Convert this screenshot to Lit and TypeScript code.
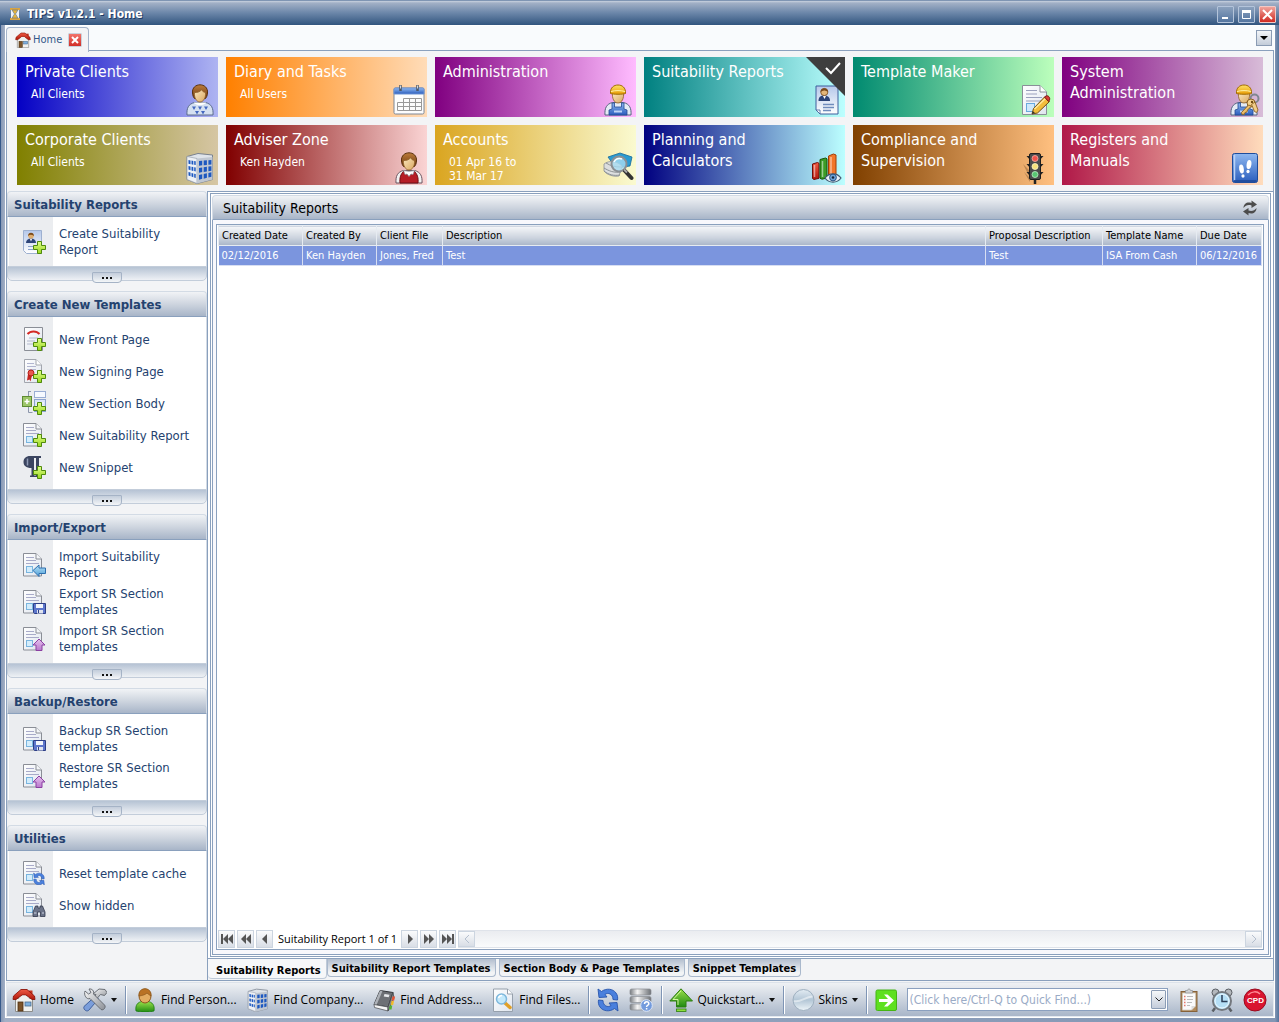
import { LitElement, html, svg, css, TemplateResult, SVGTemplateResult } from "lit";
import { customElement, state } from "lit/decorators.js";
import { classMap } from "lit/directives/class-map.js";

/* ---------- icon parts ---------- */

const frame = (size: number, art: SVGTemplateResult, box = size) =>
  html`<svg class="ico" width=${size} height=${size} viewBox="0 0 ${box} ${box}" aria-hidden="true">${art}</svg>`;

const gradients = html`<svg class="defs" width="0" height="0" aria-hidden="true">
  <defs>
    <linearGradient id="paper" x1="0" y1="0" x2="1" y2="1"><stop offset="0" stop-color="#ffffff"/><stop offset="1" stop-color="#dfe5ee"/></linearGradient>
    <linearGradient id="paperBlue" x1="0" y1="0" x2="0" y2="1"><stop offset="0" stop-color="#b5c8ea"/><stop offset="1" stop-color="#ffffff"/></linearGradient>
    <linearGradient id="skin" x1="0" y1="0" x2="1" y2="1"><stop offset="0" stop-color="#fbe6bd"/><stop offset="1" stop-color="#d9a860"/></linearGradient>
    <linearGradient id="hair" x1="0" y1="0" x2="0" y2="1"><stop offset="0" stop-color="#bd7c3a"/><stop offset="1" stop-color="#6f3c12"/></linearGradient>
    <linearGradient id="helmet" x1="0" y1="0" x2="0" y2="1"><stop offset="0" stop-color="#ffe267"/><stop offset="1" stop-color="#e79b05"/></linearGradient>
    <linearGradient id="blue" x1="0" y1="0" x2="0" y2="1"><stop offset="0" stop-color="#8fb8f0"/><stop offset="1" stop-color="#2a5dbd"/></linearGradient>
    <linearGradient id="sky" x1="0" y1="0" x2="0" y2="1"><stop offset="0" stop-color="#b8e2f8"/><stop offset="1" stop-color="#4f9fd6"/></linearGradient>
    <linearGradient id="green" x1="0" y1="0" x2="0" y2="1"><stop offset="0" stop-color="#9be04a"/><stop offset="1" stop-color="#1f8a12"/></linearGradient>
    <linearGradient id="lime" x1="0" y1="0" x2="0" y2="1"><stop offset="0" stop-color="#e0ff8a"/><stop offset="1" stop-color="#9ad71f"/></linearGradient>
    <linearGradient id="grey" x1="0" y1="0" x2="1" y2="1"><stop offset="0" stop-color="#fafafa"/><stop offset="1" stop-color="#8b8f96"/></linearGradient>
    <linearGradient id="steel" x1="0" y1="0" x2="1" y2="0"><stop offset="0" stop-color="#777b80"/><stop offset=".35" stop-color="#f5f5f5"/><stop offset="1" stop-color="#6d7176"/></linearGradient>
    <linearGradient id="red" x1="0" y1="0" x2="0" y2="1"><stop offset="0" stop-color="#ef5a43"/><stop offset="1" stop-color="#b0180c"/></linearGradient>
    <linearGradient id="purple" x1="0" y1="0" x2="0" y2="1"><stop offset="0" stop-color="#e6c3ef"/><stop offset="1" stop-color="#b977cc"/></linearGradient>
    <linearGradient id="ball" x1="0" y1="0" x2="0" y2="1"><stop offset="0" stop-color="#e3ecf3"/><stop offset=".5" stop-color="#b3c6d6"/><stop offset="1" stop-color="#eef5f9"/></linearGradient>
  </defs>
</svg>`;

const face = (dx = 0) => svg`<g transform="translate(${dx} 0)">
  <path d="M8.500 9C8 3.500 12 .8 16 .8s8 2.700 7.500 8.200c-.2 2.500-1 4.500-2 5.500h-11c-1-1-1.800-3-2-5.500z" fill="url(#hair)" stroke="#5a3210"/>
  <path d="M10.500 8.500c3 .3 5.500-.8 7-2.700 1 1.700 2.500 2.500 4 2.700.6 5-2 9.500-5.500 9.500s-6.100-4.500-5.500-9.500z" fill="url(#skin)" stroke="#8d5d26" stroke-width=".8"/></g>`;

const worker = (dx = 0) => svg`<g transform="translate(${dx} 0)">
  <path d="M3 31c-.5-7 1.500-11 7.500-12.500h11C27.500 20 29.500 24 29 31z" fill="#e4ebf5" stroke="#55657e"/>
  <path d="M7 31v-5l3-1v-6h2.500v4h7v-4H22v6l3 1v5z" fill="url(#blue)" stroke="#234a96" stroke-width=".8"/>
  <path d="M12 26.500h8v2h-8z" fill="#bcd3f5"/>
  <path d="M10.500 9h11c.6 5-1.500 10-5.500 10s-6.100-5-5.500-10z" fill="url(#skin)" stroke="#8d5d26" stroke-width=".8"/>
  <path d="M8.500 9.500C8 3.500 12 1 16 1s8 2.500 7.500 8.500c-3 1-12 1-15 0z" fill="url(#helmet)" stroke="#a06b04"/>
  <path d="M9 7.500c4-1.200 10-1.200 14 0" stroke="#fff2a8" fill="none"/></g>`;

const tileArt: Record<string, SVGTemplateResult> = {
  client: svg`<path d="M3 31c-.5-7 1.500-11 7.500-12.500h11C27.500 20 29.500 24 29 31z" fill="#d5e0f1" stroke="#5a6b8c"/>
    <path d="M10 18.500c2 3.500 10 3.500 12 0z" fill="#fff"/>
    <g fill="#4468c0"><path d="M8 22.500h4l-2 3.500zM14 22.500h4l-2 3.500zM20 22.500h4l-2 3.500zM11 27h4l-2 3.500zM17 27h4l-2 3.500z"/></g>${face()}`,
  adviser: svg`<path d="M3 31c-.5-7 1.500-11 7.500-12.500h11C27.500 20 29.500 24 29 31z" fill="#f2f2f2" stroke="#6b5560"/>
    <path d="M7 31c-.5-5 .5-9 4-12l5 5 5-5c3.500 3 4.500 7 4 12z" fill="#b51d26" stroke="#6e0d14"/>
    <path d="M10.500 18.500l1.500 4 2-.5 2 2.500 2-2.500 2 .5 1.500-4-5.500 1z" fill="#fff" stroke="#8a8f98" stroke-width=".7"/>${face()}`,
  calendar: svg`<rect x="1" y="4" width="30" height="26" rx="1.500" fill="#fdfdfd" stroke="#7d8796"/>
    <path d="M1 10V5.500C1 4.500 1.500 4 2.500 4h27c1 0 1.500.5 1.500 1.500V10z" fill="url(#blue)" stroke="#6c93d4"/>
    <path d="M7.500 1v6M24.500 1v6" stroke="#4d5868" stroke-width="2.500"/><path d="M7.500 1.500v3M24.500 1.500v3" stroke="#cfd6e0"/>
    <path d="M10.500 14.500h18v12h-24v-8h24M4.500 22.500h24M10.500 14.500v12M16.500 14.500v12M22.500 14.500v12" fill="none" stroke="#999"/>`,
  worker: worker(),
  report: svg`<path d="M5 2h22v28H9l-4-4z" fill="url(#paperBlue)" stroke="#3d5f9c"/>
    <path d="M5 26h4v4z" fill="#fff" stroke="#3d5f9c" stroke-width=".8"/>
    <path d="M7.500 17c0-4 2-5.500 5.500-5.500s6 1.500 6 5.500z" fill="#2c4478"/><path d="M12 12l1.500 3 1.500-3z" fill="#fff"/>
    <circle cx="13.300" cy="8" r="3.600" fill="#e3b679" stroke="#7a4a1b" stroke-width=".8"/><path d="M9.600 8c0-5 7.400-5 7.400 0-3-2-5-2-7.400 0z" fill="#7a4a1b"/>
    <path d="M12 20.500h11M12 23.500h11M12 26.500h8" stroke="#6f8cbc" stroke-width="1.300"/>`,
  write: svg`<path d="M2.500 1.500H20L26.500 8v22.500h-24z" fill="url(#paper)" stroke="#8a8f98"/>
    <path d="M20 1.500V8h6.500" fill="#fff" stroke="#8a8f98"/>
    <path d="M6 6.500h11M6 10h11M6 13.500h16M6 17h16" stroke="#9aa1bd"/>
    <rect x="6.500" y="19.500" width="8" height="8" fill="#cfe8fb" stroke="#68a9dd"/>
    <path d="M12 30l1.500-5.500L24.500 13l5 4.500L17.500 29z" fill="#f2bd3c" stroke="#714d10"/>
    <path d="M14.500 25l11-10.500" stroke="#ffe79a" stroke-width="1.500"/>
    <path d="M24.500 13l1.500-1c2-1 4.500 1.500 3.500 4l-1 1.500z" fill="#d83b36" stroke="#7c1512"/>
    <path d="M12 30l.8-3 2.200 2z" fill="#333"/>`,
  keys: svg`${worker(-1)}<circle cx="25.500" cy="14.500" r="4" fill="none" stroke="#7f8791" stroke-width="2"/>
    <circle cx="22" cy="19" r="4" fill="#f5d28c" stroke="#8b6120"/><circle cx="23" cy="18" r="1.200" fill="#6f4a12"/>
    <path d="M19.500 21l-7 7.500.5 2 2.500-.3.500-1.700 2-.5.500-2 4-4z" fill="#eebf6a" stroke="#8b6120" stroke-width=".9"/>
    <path d="M26 18l3 8-1.500 2.500-2-1-3-7z" fill="#f1cd88" stroke="#8b6120" stroke-width=".9"/>`,
  building: svg`<path d="M3 4.500L14 1.500 28.500 3v24.500L13 31.500l-10-4z" fill="#dfe4ea" stroke="#7a828e"/>
    <path d="M3 4.500l10 2v25l-10-4z" fill="#eef1f5" stroke="#9aa2ae" stroke-width=".7"/>
    <path d="M13 6.500L28.500 5v22.500L13 31.500z" fill="#c0c7d1"/>
    <g fill="#1c58c0"><path d="M15 9l3.200-.3v4.600L15 13.700zM19.700 8.600l3.200-.3v4.600l-3.200.4zM24.400 8.200l3-.3v4.500l-3 .4zM15 16l3.200-.5v4.600l-3.200.7zM19.700 15.300l3.200-.5v4.600l-3.200.6zM24.400 14.600l3-.4v4.500l-3 .6zM15 23l3.200-.8v4.600l-3.200.9zM19.700 22l3.200-.8v4.600l-3.200.9zM24.400 20.900l3-.7v4.600l-3 .8z"/>
    <path d="M4.500 8l2 .4v3.800l-2-.5zM7.500 8.500l1.800.4v3.800l-1.800-.4zM10.200 9l1.500.2V13l-1.500-.3zM4.500 14l2 .4v3.800l-2-.6zM7.500 14.700l1.800.4v3.800l-1.800-.5zM10.200 15.300l1.500.3v3.800l-1.500-.4zM4.500 20l2 .6v3.600l-2-.7zM7.500 21l1.800.5v3.700l-1.800-.6zM10.200 21.700l1.500.4v3.800l-1.500-.5z"/></g>`,
  accounts: svg`<path d="M6 5l12-4 12 4-2 9-14 2z" fill="#2a9bd2" stroke="#14699b" stroke-width=".8"/>
    <path d="M2 12c5-4 13-3 18 2l-3 10c-5 1-12-1-15-5z" fill="#dcdedf" stroke="#8b9094" stroke-width=".8"/>
    <path d="M2 16c5 3 10 5 17 4M2 19c5 4 10 5 16 4M4 11c5 3 9 4 15 4" fill="none" stroke="#8d9295"/>
    <circle cx="17" cy="12" r="7.500" fill="#a8dcf2" fill-opacity=".8" stroke="#8a8f94" stroke-width="2"/>
    <path d="M12 10c1.500-3 5-4.500 8-3" stroke="#fff" stroke-width="1.500" fill="none"/>
    <path d="M23 19l6.500 7" stroke="#333" stroke-width="4" stroke-linecap="round"/><path d="M22 17.500l3 3" stroke="#aaa" stroke-width="2"/>`,
  chart: svg`<path d="M1.500 12l5-1.500 1.500.8v15l-5 1.200-1.500-1z" fill="url(#red)" stroke="#6e0d08"/>
    <path d="M9 7.500l5.500-1.500 1.500.8V26l-5 1.200-2-1z" fill="#3c9c27" stroke="#175409"/>
    <path d="M17.500 4l5-2 2.500 1v22l-5 1.500-2.500-1.500z" fill="#f2762a" stroke="#a03d07"/>
    <path d="M3.500 13v12M11.500 9v16M20 5v17" stroke="#fff" stroke-opacity=".5" stroke-width="1.500"/>
    <path d="M14 26c4-5.500 12-5.500 16 0-4 5.500-12 5.500-16 0z" fill="#e8f0f8" stroke="#41576f" stroke-width="1.200"/>
    <circle cx="22" cy="25.500" r="3.400" fill="#6ea3d8" stroke="#2d5584"/><circle cx="22" cy="25.500" r="1.300" fill="#16253a"/>`,
  lights: svg`<path d="M3 12l8 8v8zM4 20l6 6v4z" fill="#5a3a1c" fill-opacity=".35"/>
    <path d="M6.500 4H11v5zM6.500 12H11v5zM6.500 20H11v5zM23.500 4H19v5zM23.500 12H19v5zM23.500 20H19v5z" fill="#222"/>
    <rect x="9.500" y="1.500" width="11" height="26" rx="1.500" fill="#4b4b4b" stroke="#1d1d1d"/><path d="M15 27v5" stroke="#222" stroke-width="2.500"/>
    <circle cx="15" cy="6.500" r="3" fill="#f0534b" stroke="#f9b0a8" stroke-width=".8"/><circle cx="15" cy="14.500" r="3" fill="#f7e27c" stroke="#fff6c4" stroke-width=".8"/><circle cx="15" cy="22.500" r="3" fill="#58c773" stroke="#bdf0c7" stroke-width=".8"/>`,
  book: svg`<rect x="3.500" y="1.500" width="25" height="29" rx="2" fill="url(#blue)" stroke="#1e4d9c"/>
    <path d="M5.500 3v25.500" stroke="#b8d2f7" stroke-width="1.500"/><path d="M5 29h22.500" stroke="#1d4796" stroke-width="1.500"/>
    <g fill="#fff"><ellipse cx="12.500" cy="17" rx="2.300" ry="4.500" transform="rotate(-8 12.500 17)"/><ellipse cx="14" cy="24" rx="1.600" ry="1.800"/>
    <ellipse cx="20" cy="12.500" rx="2.400" ry="4.600" transform="rotate(8 20 12.500)"/><ellipse cx="19" cy="19.500" rx="1.600" ry="1.800"/></g>`,
};

const doc = svg`<path d="M1.500 .5H14L19.500 6v17h-18z" fill="url(#paper)" stroke="#8a8e96"/>
  <path d="M14 .5V6h5.500" fill="#f4f6f9" stroke="#8a8e96"/>
  <path d="M4 4.500h8M4 7.500h10M4 10.500h13" stroke="#a8abc9"/>
  <rect x="4.500" y="13.500" width="6" height="6" fill="#d3ecfb" stroke="#79b5df"/>`;
const plus = svg`<path d="M15.500 11.500h4V15.500h4v4h-4v4h-4v-4h-4v-4h4z" fill="url(#lime)" stroke="#4f8a0c"/>`;
const disk = svg`<path d="M11.500 13.500h12v10h-11l-1-1z" fill="#5d76cc" stroke="#2d3e86"/><rect x="14" y="14" width="7" height="4" fill="#f2f5fb"/><rect x="15" y="20" width="6" height="3.500" fill="#dfe3ee"/><path d="M16.500 20v3" stroke="#2d3e86"/>`;
const up = svg`<path d="M17 12l6 6h-3v5.500h-6V18h-3z" fill="url(#purple)" stroke="#8b3fa2"/>`;

const halfTurn = svg`<path d="M2 1l3.500 2.500C10 0 17 .5 20 5c1.500 2 2 4.500 1.500 7l-4.500-.5c0-5.500-5-7.500-8-5L11 9l-8 .5z"/>`;
const cycle = svg`<g fill="#4a80dd" stroke="#2755ad" stroke-width=".9">${halfTurn}<g transform="rotate(180 12 12)">${halfTurn}</g></g>`;

const sideArt: Record<string, SVGTemplateResult> = {
  create: svg`<path d="M1.500 .5h18v23h-15l-3-3z" fill="url(#paperBlue)" stroke="#9db0d0"/>
    <path d="M4 13c0-3 2-4.500 5-4.500s5 1.500 5 4.500z" fill="#2c4478"/><path d="M8 9l1 2.500L10 9z" fill="#fff"/>
    <circle cx="9" cy="5.800" r="2.800" fill="#dfae70"/><path d="M6 6c0-4.500 6-4.500 6 0-2.500-1.600-4-1.600-6 0z" fill="#7a4a1b"/>
    <path d="M6 16.500h6M6 19.500h5" stroke="#8aa2cb"/>${plus}`,
  front: svg`<path d="M2.500 .5h18v23h-18z" fill="url(#paper)" stroke="#8a8e96"/><path d="M5.500 7c3-3.500 9-3.500 12 0" fill="none" stroke="#d42a25" stroke-width="2"/>
    <path d="M7 11h9M5 14h8M5 17h7" stroke="#b2b8cc"/>${plus}`,
  signing: svg`<path d="M2.500 .5H14L19.500 6v17.500h-17z" fill="url(#paper)" stroke="#a2a6ae"/><path d="M14 .5V6h5.500" fill="#fff" stroke="#a2a6ae"/><path d="M5 4.500h7M5 7.500h9M5 10.500h9" stroke="#b2b6d0"/>
    <path d="M6 15l-1 6.500 2.500-1 1 2 1.500-6z" fill="#c4251f"/><circle cx="9" cy="14" r="3" fill="#e85a4f" stroke="#b4201a"/>${plus}`,
  section: svg`<path d="M6 .5h3M6.500 .5v21h4" fill="none" stroke="#8c96ab"/><rect x="12.500" y=".5" width="11" height="6" fill="#f6f9ff" stroke="#9aaed4"/>
    <rect x="12.500" y="8.500" width="11" height="12" fill="#d9e4f8" stroke="#8ca3d0"/><path d="M14 12h8M14 15h8" stroke="#fff"/>
    <rect x=".5" y="5.500" width="9" height="10" fill="#9cc568" stroke="#5e8b31"/><path d="M5 8v5M2.500 10.500h5" stroke="#fff" stroke-width="1.500"/>${plus}`,
  suit: svg`${doc}${plus}`,
  snippet: svg`<path d="M8 1h11v2h-2v17.500h1V22h-5v-1.500h1V3h-2v17.500h1V22H8v-1.500h1.500V13C4 13 1.500 10.500 1.500 7S4 1 8 1z" fill="#3b4560"/><path d="M5.500 3.500v7" stroke="#8f9ab5" stroke-width="1.500"/>${plus}`,
  importReport: svg`${doc}<path d="M11 17.500l6-5.500v3h6.500v5.500H17v3z" fill="url(#sky)" stroke="#2c6fae"/>`,
  save: svg`${doc}${disk}`,
  up: svg`${doc}${up}`,
  reset: svg`${doc}<g transform="translate(10.500 11.500) scale(.54)">${cycle}</g>`,
  hidden: svg`${doc}<path d="M13.500 13h2.500v2h2v-2h2.500l2.500 6v4.500h-4.500V19h-3v4.500H11V19z" fill="#6b7388" stroke="#333a4e" stroke-width=".8"/><path d="M12 20h2.500M20 20h2" stroke="#cfd5e3"/>`,
};

const house = svg`<path d="M3.500 10.500h17v13h-17z" fill="#f1f1ee" stroke="#8d8d8a"/>
  <path d="M17 2.500h3.500v5H17z" fill="#c5341f"/>
  <path d="M1 11.500L1.500 8 9 1.500h6L22.500 8l.5 3.500h-3L14 7h-4l-6 4.500z" fill="url(#red)" stroke="#8c1409" stroke-width=".9"/>
  <path d="M10.500 7.500h3l5.500 4.500v1H5v-1z" fill="#f1f1ee"/>
  <rect x="6" y="14" width="5" height="9" fill="#7d5429" stroke="#4b2f12" stroke-width=".8"/>
  <rect x="13" y="14" width="6" height="4" fill="#7dafde" stroke="#4a6b8d" stroke-width=".8"/>`;

const barArt: Record<string, SVGTemplateResult> = {
  home: house,
  tools: svg`<path d="M1 18.500L12.500 8l3 3L5.500 22.500c-2.500 1.500-5.500-1.500-4.500-4z" fill="#7b9edb" stroke="#40609c"/>
    <path d="M10 6l6-5 6 .5 2 3-2.500 3-4-1-3.500 4-2.500-1.500 1.500-2.500z" fill="url(#grey)" stroke="#5f636a" stroke-width=".9"/>
    <path d="M2 3l3.500 3L8 4.500 6 1c3-.5 5.500 2 4.500 5l11 11c2 2-1 6-3.500 4.500L7 10.500C3.500 12 .5 7 2 3z" fill="url(#grey)" stroke="#5f636a" stroke-width=".9"/>`,
  person: svg`<path d="M3 23c-1-6 2-9 6-9.500h6c4 .5 7 3.500 6 9.500-5 1.500-13 1.500-18 0z" fill="url(#green)" stroke="#177a10" stroke-width=".8"/>
    <ellipse cx="12" cy="8" rx="6" ry="7" fill="#e3ad62" stroke="#8a5519"/><path d="M6 8C5.500 3 8.500.8 12 .8S18.500 3 18 8c-1.500-1-3-2-4-3-2 2-5 2.500-8 3z" fill="#b97325" stroke="#8a5519" stroke-width=".7"/>`,
  book: svg`<path d="M8 2.500l13 2-5 14.500L2 16.500z" fill="#6d7075" stroke="#33363a"/><path d="M2 16.500L8 2.500l2.500.4L4.500 17z" fill="#aeb2b8"/><path d="M2 16.500l.5 3 13.500 3.500V19z" fill="#f4f4f4" stroke="#55585d" stroke-width=".8"/><path d="M16 19v4l6-13-1-5.500z" fill="#888b90" stroke="#44474b" stroke-width=".8"/>
    <path d="M12.500 6l5 .8-.8 2.500-5-.8z" fill="#e7e9ec"/><path d="M20.500 8.500h2.500l-.8 4h-2.500z" fill="#e95332"/><path d="M19.500 13H22l-.8 4h-2.500z" fill="#f3bb2b"/><path d="M17.800 17.500h2.500l-.8 4H17z" fill="#55b434"/>`,
  file: svg`<path d="M2.500 1h14l5 5v17.500h-19z" fill="url(#paper)" stroke="#96a0ac"/><path d="M16.500 1v5h5" fill="#fff" stroke="#96a0ac"/>
    <path d="M14 15l5 4.500" stroke="#e0a028" stroke-width="3.500" stroke-linecap="round"/><circle cx="10.500" cy="11" r="5" fill="#c4e9fb" stroke="#7db7dc" stroke-width="1.500"/><path d="M7.500 10c.5-1.500 2-2.500 3.500-2.500" stroke="#fff" stroke-width="1.500" fill="none"/>`,
  refresh: cycle,
  database: svg`<rect x="1" y="1" width="21" height="6" rx="1.500" fill="url(#steel)" stroke="#8a8e94" stroke-width=".7"/><rect x="1" y="8.500" width="21" height="6" rx="1.500" fill="url(#steel)" stroke="#8a8e94" stroke-width=".7"/><rect x="1" y="16" width="21" height="6" rx="1.500" fill="url(#steel)" stroke="#8a8e94" stroke-width=".7"/>
    <circle cx="17.500" cy="17.500" r="5.800" fill="#739bdd" stroke="#dbe6f8"/><path d="M15.500 16c0-3 4.300-3 4.300-.3 0 1.600-2.200 1.500-2.200 3.200M17.600 20v1.600" fill="none" stroke="#fff" stroke-width="1.500"/>`,
  quick: svg`<path d="M12 .8L23.500 13H17v6H7.500v-6H.8z" fill="url(#green)" stroke="#2d7d10"/><path d="M12 3L4 11.500h5V17" fill="none" stroke="#d2f59f"/><rect x="7.500" y="21" width="9.500" height="2.500" fill="#8ee03c" stroke="#2d7d10" stroke-width=".8"/>`,
  skins: svg`<circle cx="12.500" cy="12" r="10.500" fill="url(#ball)" stroke="#9fb0c0"/><path d="M3 13c6 2 11-4 18.500-4.500" fill="none" stroke="#fff" stroke-opacity=".5" stroke-width="2"/>`,
  go: svg`<rect x="2" y="2" width="20.500" height="20.500" rx="1.500" fill="#5ee020" stroke="#45b414"/><path d="M5 11h9l-4-4.500h3.500L20 12.500l-6.500 6H10l4-4.500H5z" fill="#fff"/>`,
  clipboard: svg`<rect x="4" y="3.500" width="16" height="20" fill="#b08a5c" stroke="#86623a"/><path d="M5.500 5h13v13l-4 4h-9z" fill="#fafafa" stroke="#cbc5bb" stroke-width=".7"/><path d="M14.500 22v-4h4z" fill="#dcdcdc"/>
    <path d="M8.500 5V2.500h2c0-2 3-2 3 0h2V5z" fill="#d0d2d4" stroke="#8c8f92" stroke-width=".7"/><path d="M10 8.500h6M10 11.500h6M10 14.500h5M10 17.500h3" stroke="#bbb"/><path d="M7 8.500h1.500M7 11.500h1.500M7 14.500h1.500M7 17.500h1.500" stroke="#e8776b" stroke-width="1.500"/>`,
  clock: svg`<path d="M5 20l-2.500 3.500M19 20l2.500 3.500" stroke="#5b6066" stroke-width="2.500"/><circle cx="5.500" cy="4.500" r="3.500" fill="#b4b8bd" stroke="#5a5e64"/><circle cx="18.500" cy="4.500" r="3.500" fill="#b4b8bd" stroke="#5a5e64"/>
    <circle cx="12" cy="13" r="9" fill="#b5dff6" stroke="#74787e" stroke-width="2"/><circle cx="12" cy="13" r="7" fill="none" stroke="#eef9ff"/><path d="M12 7v6.500h5.500" fill="none" stroke="#2a3e57" stroke-width="1.500"/>`,
  cpd: svg`<circle cx="12" cy="12" r="11" fill="#d9142f" stroke="#9a0a1e"/><path d="M5 7c4-4 9-4 12-1" fill="none" stroke="#ff8a95" stroke-width="1.500"/><text class="cpd" x="12.500" y="15" text-anchor="middle">CPD</text>`,
};

const caret = html`<svg class="ico" width="6" height="4" viewBox="0 0 6 4" aria-hidden="true"><path d="M0 0h6L3 4z" fill="#111"/></svg>`;

/* ---------- data ---------- */

interface Tile { title: string; sub?: string; icon: string; from: string; to: string }
const tiles: Tile[] = [
  { title: "Private Clients", sub: "All Clients", icon: "client", from: "#0400c4", to: "#aeb4f2" },
  { title: "Diary and Tasks", sub: "All Users", icon: "calendar", from: "#ff8000", to: "#ffdcb8" },
  { title: "Administration", icon: "worker", from: "#800080", to: "#ffbcff" },
  { title: "Suitability Reports", icon: "report", from: "#008080", to: "#bcffff" },
  { title: "Template Maker", icon: "write", from: "#008a70", to: "#bcffbc" },
  { title: "System\nAdministration", icon: "keys", from: "#800080", to: "#d8bcd8" },
  { title: "Corporate Clients", sub: "All Clients", icon: "building", from: "#808000", to: "#d6c6a4" },
  { title: "Adviser Zone", sub: "Ken Hayden", icon: "adviser", from: "#800000", to: "#fad4d4" },
  { title: "Accounts", sub: "01 Apr 16 to\n31 Mar 17", icon: "accounts", from: "#daa520", to: "#fafad0" },
  { title: "Planning and\nCalculators", icon: "chart", from: "#000080", to: "#bcffff" },
  { title: "Compliance and\nSupervision", icon: "lights", from: "#804000", to: "#ffc080" },
  { title: "Registers and\nManuals", icon: "book", from: "#b01848", to: "#ffdcbc" },
];

const sections: { title: string; items: [string, string][] }[] = [
  { title: "Suitability Reports", items: [["create", "Create Suitability\nReport"]] },
  { title: "Create New Templates", items: [["front", "New Front Page"], ["signing", "New Signing Page"], ["section", "New Section Body"], ["suit", "New Suitability Report"], ["snippet", "New Snippet"]] },
  { title: "Import/Export", items: [["importReport", "Import Suitability\nReport"], ["save", "Export SR Section\ntemplates"], ["up", "Import SR Section\ntemplates"]] },
  { title: "Backup/Restore", items: [["save", "Backup SR Section\ntemplates"], ["up", "Restore SR Section\ntemplates"]] },
  { title: "Utilities", items: [["reset", "Reset template cache"], ["hidden", "Show hidden"]] },
];

const columns = ["Created Date", "Created By", "Client File", "Description", "Proposal Description", "Template Name", "Due Date"];
const rows = [["02/12/2016", "Ken Hayden", "Jones, Fred", "Test", "Test", "ISA From Cash", "06/12/2016"]];
const pages = ["Suitability Reports", "Suitability Report Templates", "Section Body & Page Templates", "Snippet Templates"];

const tri = (x: number, dir: number) => svg`<path d="M${x} 6l${dir * 5}-5v10z"/>`;
const navArt: Record<string, SVGTemplateResult> = {
  First: svg`<path d="M0 1h2v10H0z"/>${tri(2, 1)}${tri(7, 1)}`,
  "Previous page": svg`${tri(1, 1)}${tri(6, 1)}`,
  Previous: svg`${tri(3, 1)}`,
  Next: svg`${tri(9, -1)}`,
  "Next page": svg`${tri(6, -1)}${tri(11, -1)}`,
  Last: svg`${tri(5, -1)}${tri(10, -1)}<path d="M10 1h2v10h-2z"/>`,
};

@customElement("app-root")
export class AppRoot extends LitElement {
  @state() private current = "Suitability Reports";
  @state() private page = 0;

  static styles = css`
    :host {
      --tahoma: "DejaVu Sans Condensed", "DejaVu Sans", sans-serif;
      --segoe: "Open Sans", "Noto Sans", sans-serif;
      --line: #8aa0bd;
      --soft: #d3dbe5;
      --bar: linear-gradient(#f1f3f6, #ced5df 50%, #a8b5c8);
      display: flex; flex-direction: column; box-sizing: border-box; min-height: 100vh;
      padding: 0 4px 4px 4px; border-left: 1px solid #36598a;
      background: linear-gradient(90deg, #8799b6, #a3b0c6 4px, #8296b4 calc(100% - 4px), #54749c);
      font: 12px/16px var(--tahoma); color: #000;
    }
    *, *::before { box-sizing: border-box; }
    button { font: inherit; color: inherit; border: 0; padding: 0; margin: 0; background: none; text-align: left; cursor: pointer; }
    .ico { display: block; flex: none; }
    .defs { position: absolute; }

    .title { display: flex; align-items: center; gap: 4px; height: 25px; margin: 0 -4px 0 -5px; padding: 2px 3px 0 8px;
      border-top: 1px solid #7f95b3; background: linear-gradient(#c9d2df, #a2b0c6 2px, #6b86a9 50%, #32557f); color: #fff; }
    .title h1 { flex: 1; margin: 0; font: bold 12px/16px var(--tahoma); text-shadow: 1px 1px 0 #1f3a63; }
    .title .ico { margin-right: 2px; }
    .win { display: grid; place-items: center; width: 17px; height: 17px; border: 1px solid #b4c4da; border-radius: 1px; background: linear-gradient(#8ba1bd, #5475a0); }
    .win .ico { margin: 0; }
    .win.close { background: linear-gradient(#f0a49c, #d02a22); border-color: #f3c9c5; }

    .client { flex: 1; display: flex; flex-direction: column; border: 1px solid #fff; background: #f3f4f6; }
    .strip { display: flex; height: 25px; align-items: stretch; background: #f9fbfd; }
    .tab { display: flex; align-items: center; gap: 2px; padding: 0 6px 0 8px; border: 1px solid #a5b4ca; border-bottom: 0; border-radius: 4px 4px 0 0; background: #f3f4f6; color: #34588a; margin: 1px 0 -1px; z-index: 1; }
    .tab .label { margin-right: 4px; font-size: 11px; }
    .tabclose { display: grid; place-items: center; width: 14px; height: 14px; border: 1px solid #c9d0da; border-radius: 1px; background: linear-gradient(#f2746a, #d12e28); }
    .strip .rest { flex: 1; display: flex; justify-content: flex-end; align-items: center; padding-right: 2px; border-bottom: 1px solid var(--line); }
    .drop { display: grid; place-items: center; width: 16px; height: 16px; border: 1px solid #8a9bb3; background: linear-gradient(#f3f5f8, #c3ccd9); }

    .desk { flex: 1; display: flex; flex-direction: column; border: 1px solid var(--line); border-top: 0; }
    .tiles { display: grid; grid-template-columns: repeat(6, 1fr); grid-auto-rows: 60px; gap: 8px; padding: 6px 10px; }
    .tile { position: relative; display: flex; justify-content: space-between; padding: 4px 2px 1px 8px; color: #fff; overflow: hidden;
      background: linear-gradient(90deg, var(--from), var(--to)); font-family: var(--tahoma); }
    .tile .ico { align-self: flex-end; }
    .tile b, .tile i { display: block; white-space: pre-line; font-weight: normal; font-style: normal; }
    .tile b { font-size: 16px; line-height: 21px; }
    .tile i { margin: 5px 0 0 6px; font-size: 12px; line-height: 14px; }
    .tile .words { align-self: flex-start; white-space: nowrap; }
    .corner { position: absolute; top: 0; right: 0; }

    .work { flex: 1; display: flex; }
    .side { flex: none; width: 200px; display: flex; flex-direction: column; gap: 10px; }
    .side h2 { margin: 0; height: 26px; padding: 4px 6px; border: 1px solid var(--soft); border-bottom-color: var(--line); border-radius: 4px 4px 0 0; background: var(--bar);
      font: bold 13px/17px var(--tahoma); color: #24426f; }
    .items { margin: 0; padding: 6px 0; list-style: none; border: solid var(--soft); border-width: 0 1px; background: linear-gradient(90deg, #fff 1px, #ebedf0 1px, #ebedf0 45px, #fff 45px); }
    .items li { display: flex; min-height: 32px; }
    .items button { flex: 1; display: grid; grid-template-columns: 24px 1fr; gap: 13px; align-items: center; padding: 0 0 0 14px; font-size: 13px; color: #24426f; }
    .items .two { min-height: 37px; }
    .items .words { white-space: pre-line; padding-top: 1px; }
    .foot { display: flex; justify-content: center; height: 15px; padding-top: 5px; border: 1px solid #c3cdda; border-radius: 0 0 5px 5px; background: linear-gradient(#b6c3d4, #eef1f5); }
    .grip { display: flex; justify-content: center; align-items: center; gap: 2px; width: 30px; height: 11px; border: 1px solid #a5b3c6; border-radius: 1px 1px 4px 4px; background: linear-gradient(#c3cddb, #f4f6f8); }
    .grip span { width: 2px; height: 2px; background: #111; }

    .main { flex: 1; min-width: 0; display: flex; flex-direction: column; border-left: 1px solid var(--line); }
    .outer { flex: 1; display: flex; flex-direction: column; padding: 1px; border: solid var(--line); border-width: 1px 0 1px 0; background: #fff; }
    .mid { flex: 1; display: flex; flex-direction: column; margin: 0 1px; padding: 1px; border: 1px solid var(--line); background: #fff; }
    .inner { flex: 1; display: flex; flex-direction: column; border: solid var(--line); border-width: 0 1px 1px; background: #f8f8fc; }
    .head { display: flex; align-items: center; height: 25px; padding: 0 10px; border: 1px solid var(--soft); border-bottom: 1px solid var(--line); border-radius: 4px 4px 0 0; background: var(--bar); }
    .head h2 { flex: 1; margin: 0; font: 14px/20px var(--tahoma); }
    .grid { flex: 1; display: flex; flex-direction: column; margin: 4px 4px 4px 3px; border: 1px solid var(--line); background: #fff; padding: 0 1px 1px; }
    table { width: 100%; border-collapse: collapse; table-layout: fixed; font: 11px/14px var(--tahoma); }
    th { height: 20px; padding: 0 3px; font-weight: normal; text-align: left; border: 1px solid #e6ebf1; background: linear-gradient(#f6f7f9, #ccd3de 60%, #a9b5c8); white-space: nowrap; }
    td { height: 20px; padding: 0 3px; color: #fff; background: #7b95de; border: 1px solid #d7def2; border-left-width: 0; white-space: nowrap; }
    .c0 { width: 84px; } .c1 { width: 74px; } .c2 { width: 66px; } .c4 { width: 117px; } .c5 { width: 94px; } .c6 { width: 65px; }
    .fill { flex: 1; }
    .nav { display: flex; align-items: center; gap: 2px; height: 19px; font: 11px/16px var(--segoe); }
    .nav button { display: grid; place-items: center; width: 17px; height: 18px; border: 1px solid #ccd5e0; background: linear-gradient(#fafbfc, #d9dee6); fill: #555; }
    .nav .count { margin: 0 2px 0 3px; }
    .scroll { flex: 1; display: flex; justify-content: space-between; height: 18px; border: solid #dfe3ea; border-width: 1px 0; background: linear-gradient(#eaecf0, #fafbfc); }
    .nav .scroll button { height: 16px; stroke: #b4bfce; fill: none; }

    .pages { display: flex; align-items: flex-start; gap: 3px; height: 21px; font: bold 11px/15px var(--tahoma); }
    .pages button { height: 18px; padding: 2px 4px 0; border: 1px solid #a9b8cc; border-top: 0; border-radius: 0 0 4px 4px; background: linear-gradient(#b3bece, #f2f4f6 80%); white-space: nowrap; }
    .pages .on { height: 20px; padding: 3px 5px 0 8px; margin-right: -3px; border-left: 0; background: #f6f7f9; border-color: #bfcad8; }

    .toolbar { display: flex; align-items: center; gap: 9px; height: 35px; margin-top: 1px; padding: 0 6px 0 5px; border: 1px solid #e4e9ef; border-top-color: #dce2ea; background: linear-gradient(#eff1f4, #cbd3de 50%, #a9b6c9); font: 12px/16px var(--segoe); white-space: nowrap; }
    .toolbar button { display: flex; align-items: center; gap: 4px; flex: none; }
    .sep { flex: none; width: 1px; height: 28px; margin: 0 -2px 0 -1px; background: #7f95b5; box-shadow: 1px 0 0 #fff; }
    .find { flex: 1; min-width: 0; display: flex; height: 23px; padding: 1px; border: 1px solid #8ba0bf; background: #fff; }
    .find input { flex: 1; min-width: 0; border: 0; outline: 0; padding: 0 1px; font: 12px/16px var(--tahoma); }
    .find input::placeholder { color: #9aabc6; opacity: 1; }
    .toolbar .find button { width: 15px; height: 19px; justify-content: center; border: 1px solid #8c9db5; background: linear-gradient(#f5f7f9, #c4cddb); border-radius: 1px; }
    .cpd { font: bold 8px "Liberation Sans", sans-serif; fill: #fff; }
  `;

  private tool(icon: string, label = "", menu = false): TemplateResult {
    return html`<button type="button" aria-label=${label || icon}>${frame(24, barArt[icon])}${label ? html`<span>${label}</span>` : ""}${menu ? caret : ""}</button>`;
  }

  private nav(name: string) {
    return html`<button type="button" aria-label=${name}>${frame(12, navArt[name])}</button>`;
  }

  private tile(t: Tile) {
    return html`<button type="button" class="tile" style="--from:${t.from};--to:${t.to}" @click=${() => (this.current = t.title)}>
      <span class="words"><b>${t.title}</b>${t.sub ? html`<i>${t.sub}</i>` : ""}</span>
      ${frame(32, tileArt[t.icon])}
      ${this.current === t.title
        ? html`<svg class="corner" width="39" height="39" viewBox="0 0 39 39" aria-hidden="true"><path d="M0 0h39v39z" fill="#3e3e3e"/><path d="M20 11l5 5 9-10" fill="none" stroke="#fff" stroke-width="2"/></svg>`
        : ""}
    </button>`;
  }

  render() {
    return html`${gradients}
      <header class="title">
        <svg class="ico" width="13" height="14" viewBox="0 0 13 14" aria-hidden="true"><path d="M2 1h10v2H2zM2 11h10v2H2z" fill="#d9a441"/><path d="M3 3h8v8H3z" fill="#eef3fa"/><path d="M4 3h6L7.500 7l2.500 4H4l2.500-4z" fill="#e8b63a" stroke="#55719a" stroke-width=".6"/></svg>
        <h1>TIPS v1.2.1 - Home</h1>
        <button type="button" class="win" aria-label="Minimise"><svg class="ico" width="11" height="11" aria-hidden="true"><path d="M2 8h6v2H2z" fill="#fff"/></svg></button>
        <button type="button" class="win" aria-label="Maximise"><svg class="ico" width="11" height="11" aria-hidden="true"><path d="M1.500 2v7.500h8V2z" fill="none" stroke="#fff"/><path d="M1 1h9v3H1z" fill="#fff"/></svg></button>
        <button type="button" class="win close" aria-label="Close"><svg class="ico" width="11" height="11" aria-hidden="true"><path d="M1 1l9 9M10 1l-9 9" stroke="#fff" stroke-width="2"/></svg></button>
      </header>
      <div class="client">
        <div class="strip">
          <div class="tab">${frame(16, house, 24)}<span class="label">Home</span>
            <button type="button" class="tabclose" aria-label="Close tab"><svg class="ico" width="8" height="8" aria-hidden="true"><path d="M1 1l6 6M7 1L1 7" stroke="#fff" stroke-width="2"/></svg></button>
          </div>
          <div class="rest"><button type="button" class="drop" aria-label="Tab list"><svg class="ico" width="8" height="4" aria-hidden="true"><path d="M0 0h8L4 4z"/></svg></button></div>
        </div>
        <div class="desk">
          <nav class="tiles">${tiles.map((t) => this.tile(t))}</nav>
          <div class="work">
            <aside class="side">
              ${sections.map((s) => html`<section>
                <h2>${s.title}</h2>
                <ul class="items">${s.items.map(([icon, text]) => html`<li class=${text.includes("\n") ? "two" : "one"}>
                  <button type="button">${frame(24, sideArt[icon])}<span class="words">${text}</span></button></li>`)}</ul>
                <div class="foot"><div class="grip"><span></span><span></span><span></span></div></div>
              </section>`)}
            </aside>
            <main class="main">
              <div class="outer"><div class="mid">
                <div class="head"><h2>Suitability Reports</h2>
                  <svg class="ico" width="16" height="16" viewBox="0 0 16 16" aria-hidden="true"><path d="M1.500 8c0-4.500 4-6.500 8-5V.5l5.500 4-5.500 3.500V5.500C6 4.500 3.500 5.500 1.500 8zM14.500 8c0 4.500-4 6.500-8 5v2.500L1 11.500 6.500 8v2.500c3.500 1 6 0 8-2.500z" fill="#4c4c4c"/></svg>
                </div>
                <div class="inner"><div class="grid">
                  <table>
                    <colgroup>${columns.map((_, i) => html`<col class="c${i}">`)}</colgroup>
                    <thead><tr>${columns.map((c) => html`<th scope="col">${c}</th>`)}</tr></thead>
                    <tbody>${rows.map((r) => html`<tr>${r.map((c) => html`<td>${c}</td>`)}</tr>`)}</tbody>
                  </table>
                  <div class="fill"></div>
                  <div class="nav">
                    ${["First", "Previous page", "Previous"].map((n) => this.nav(n))}
                    <span class="count">Suitability Report 1 of 1</span>
                    ${["Next", "Next page", "Last"].map((n) => this.nav(n))}
                    <div class="scroll">
                      <button type="button" aria-label="Scroll left"><svg class="ico" width="8" height="8" aria-hidden="true"><path d="M6 0L2 4l4 4"/></svg></button>
                      <button type="button" aria-label="Scroll right"><svg class="ico" width="8" height="8" aria-hidden="true"><path d="M2 0l4 4-4 4"/></svg></button>
                    </div>
                  </div>
                </div></div>
              </div></div>
              <div class="pages" role="tablist">
                ${pages.map((p, i) => html`<button type="button" role="tab" class=${classMap({ on: i === this.page })} aria-selected=${i === this.page} @click=${() => (this.page = i)}>${p}</button>`)}
              </div>
            </main>
          </div>
        </div>
        <footer class="toolbar">
          ${this.tool("home", "Home")}${this.tool("tools", "", true)}
          <span class="sep"></span>
          ${this.tool("person", "Find Person...")}
          <button type="button">${frame(24, tileArt.building, 32)}<span>Find Company...</span></button>
          ${this.tool("book", "Find Address...")}${this.tool("file", "Find Files...")}
          <span class="sep"></span>
          ${this.tool("refresh")}${this.tool("database")}
          <span class="sep"></span>
          ${this.tool("quick", "Quickstart...", true)}
          <span class="sep"></span>
          ${this.tool("skins", "Skins", true)}
          <span class="sep"></span>
          ${this.tool("go")}
          <div class="find"><input type="text" aria-label="Quick find" placeholder="(Click here/Ctrl-Q to Quick Find...)"><button type="button" aria-label="Recent searches"><svg class="ico" width="8" height="5" aria-hidden="true"><path d="M0.500 .5L4 4 7.500 .5" fill="none" stroke="#222"/></svg></button></div>
          ${this.tool("clipboard")}${this.tool("clock")}${this.tool("cpd")}
        </footer>
      </div>`;
  }
}
